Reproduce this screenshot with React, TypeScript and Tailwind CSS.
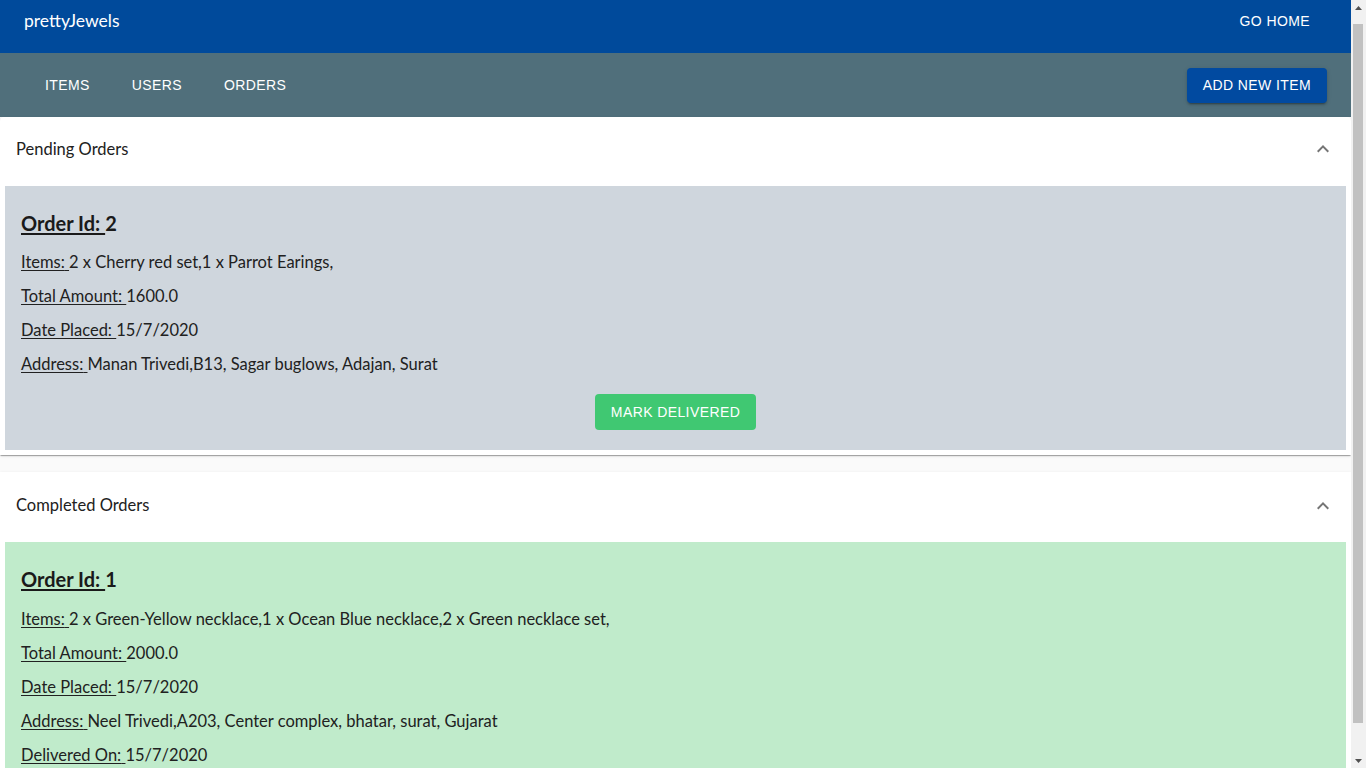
import React from 'react';

type Order = {
  id: number;
  items: string;
  total: string;
  placed: string;
  address: string;
  delivered?: string;
};

const pending: Order[] = [
  { id: 2, items: '2 x Cherry red set,1 x Parrot Earings,', total: '1600.0', placed: '15/7/2020', address: 'Manan Trivedi,B13, Sagar buglows, Adajan, Surat' },
];

const completed: Order[] = [
  {
    id: 1,
    items: '2 x Green-Yellow necklace,1 x Ocean Blue necklace,2 x Green necklace set,',
    total: '2000.0',
    placed: '15/7/2020',
    address: 'Neel Trivedi,A203, Center complex, bhatar, surat, Gujarat',
    delivered: '15/7/2020',
  },
];

const ubuntu = "font-['Lato','Noto_Sans',sans-serif]";
const arial = "font-['Liberation_Sans',Arial,sans-serif]";

function ExpandLess() {
  return (
    <svg className="w-6 h-6 text-[#757575]" viewBox="0 0 24 24" fill="currentColor">
      <path d="M12 8l-6 6 1.41 1.41L12 10.83l4.59 4.58L18 14z" />
    </svg>
  );
}

function Field({ label, value }: { label: string; value: string }) {
  return (
    <p className="text-[16.5px] leading-[18px] text-[#212121]">
      <span className="underline underline-offset-2">{label} </span>
      {value}
    </p>
  );
}

function OrderCard({ order, done }: { order: Order; done?: boolean }) {
  return (
    <div className={`${done ? 'bg-[#c0ebcb] pb-[26px]' : 'bg-[#cfd6dd] pb-[20px]'} px-4 pt-[26px]`}>
      <h3 className="text-[20px] leading-[22px] font-bold text-[#1a1a1a]">
        <span className="underline underline-offset-2">Order Id: </span>
        {order.id}
      </h3>
      <div className={`flex flex-col gap-4 ${done ? 'mt-[20px]' : 'mt-[19px]'}`}>
        <Field label="Items:" value={order.items} />
        <Field label="Total Amount:" value={order.total} />
        <Field label="Date Placed:" value={order.placed} />
        <Field label="Address:" value={order.address} />
        {order.delivered && <Field label="Delivered On:" value={order.delivered} />}
      </div>
      {!done && (
        <div className="flex justify-center mt-[21px]">
          <button className={`${arial} h-9 px-4 rounded bg-[#40c872] text-white text-[14px] uppercase tracking-[0.4px]`}>
            Mark Delivered
          </button>
        </div>
      )}
    </div>
  );
}

function Section({ title, orders, done, first }: { title: string; orders: Order[]; done?: boolean; first?: boolean }) {
  return (
    <div
      className={`bg-white shadow-[0_2px_1px_-1px_rgba(0,0,0,0.2),0_1px_1px_0_rgba(0,0,0,0.14),0_1px_3px_0_rgba(0,0,0,0.12)] ${first ? 'rounded-t' : 'rounded-b mt-[17px]'}`}
    >
      <div className={`flex items-center justify-between px-4 ${first ? 'h-16' : 'h-[65px] pt-[2px]'}`}>
        <span className="text-[16.5px] text-[#212121]">{title}</span>
        <ExpandLess />
      </div>
      <div className="p-[5px] flex flex-col gap-2">
        {orders.map((o) => (
          <OrderCard key={o.id} order={o} done={done} />
        ))}
      </div>
    </div>
  );
}

// page scrollbar as it shows in the window
function ScrollTrack() {
  return (
    <div className="w-[15px] shrink-0 h-screen bg-[#f1f1f1] flex flex-col">
      <div className="h-[15px] flex items-center justify-center">
        <svg width="7" height="4" viewBox="0 0 7 4" fill="#505050"><path d="M3.5 0L7 4H0z" /></svg>
      </div>
      <div className="mt-[9px] ml-[2px] w-[10px] h-[699px] bg-[#c1c1c1]" />
      <div className="mt-auto h-[15px] flex items-center justify-center">
        <svg width="7" height="4" viewBox="0 0 7 4" fill="#505050"><path d="M0 0h7L3.5 4z" /></svg>
      </div>
    </div>
  );
}

export default function App() {
  return (
    <div className={`${ubuntu} h-screen flex bg-[#fafafa]`}>
      <div className="flex-1 h-screen overflow-y-auto">
        <div className="pb-4">
          <header className="h-[53px] bg-[#004a9b] text-white">
            <div className="h-[42px] flex items-center justify-between pl-6 pr-[41px]">
              <span className="text-[17.5px]">prettyJewels</span>
              <button className={`${arial} text-[14px] uppercase tracking-[0.4px]`}>Go Home</button>
            </div>
          </header>
          <nav className="h-16 bg-[#506f7b] flex items-center justify-between pl-6 pr-6">
            <div className={`${arial} flex text-white text-[14px]`}>
              <button className="px-[21px] uppercase tracking-[0.4px]">Items</button>
              <button className="px-[21px] uppercase tracking-[0.4px]">Users</button>
              <button className="px-[21px] uppercase tracking-[0.4px]">Orders</button>
            </div>
            <button className={`${arial} h-[35px] px-4 rounded bg-[#014aa0] text-white text-[14px] uppercase tracking-[0.4px] shadow-[0_3px_1px_-2px_rgba(0,0,0,0.2),0_2px_2px_0_rgba(0,0,0,0.14),0_1px_5px_0_rgba(0,0,0,0.12)]`}>
              Add New Item
            </button>
          </nav>
          <Section title="Pending Orders" orders={pending} first />
          <Section title="Completed Orders" orders={completed} done />
        </div>
      </div>
      <ScrollTrack />
    </div>
  );
}
